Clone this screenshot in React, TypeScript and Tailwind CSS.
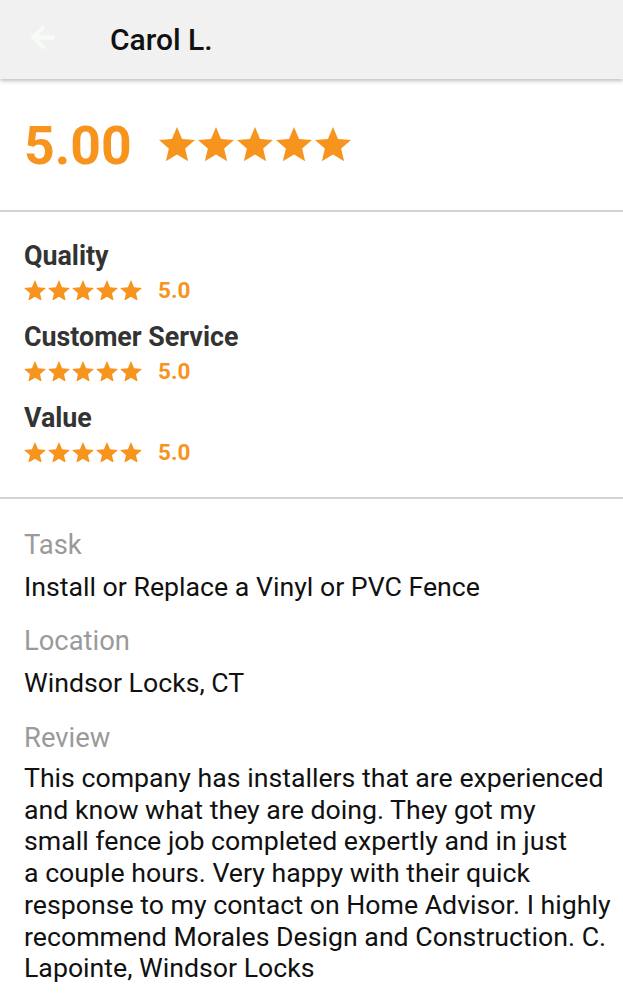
import React from "react";

const STAR = "M12 17.27L18.18 21l-1.64-7.03L22 9.24l-7.19-.61L12 2 9.19 8.63 2 9.24l5.46 4.73L5.82 21z";

function Stars({ size, gap }: { size: number; gap: string }) {
  return (
    <div className={`flex ${gap}`}>
      {[0, 1, 2, 3, 4].map((i) => (
        <svg key={i} width={size} height={size * 0.95} viewBox="2 2 20 19" fill="#f7941d">
          <path d={STAR} />
        </svg>
      ))}
    </div>
  );
}

function Rating({ label }: { label: string }) {
  return (
    <div className="flex flex-col">
      <div className="text-[26.8px] font-bold leading-[30px] text-[#333333]">{label}</div>
      <div className="mt-[5px] flex h-[28px] items-center">
        <Stars size={22} gap="gap-[2px]" />
        <span className="ml-[16px] text-[22.5px] font-bold leading-[28px] text-[#f7941d]">5.0</span>
      </div>
    </div>
  );
}

const lines = [
  "This company has installers that are experienced",
  "and know what they are doing. They got my",
  "small fence job completed expertly and in just",
  "a couple hours. Very happy with their quick",
  "response to my contact on Home Advisor. I highly",
  "recommend Morales Design and Construction. C.",
  "Lapointe, Windsor Locks",
];

export default function App() {
  return (
    <div className="min-h-[1000px] bg-white" style={{ fontFamily: "Roboto, 'Noto Sans', sans-serif" }}>
      <header className="relative z-10 flex h-[79px] items-center bg-[#f1f1f1] shadow-[0_2px_4px_rgba(0,0,0,0.25)]">
        <div className="ml-[29px] mb-[4px] flex w-[27px] items-center justify-center">
          <svg width="27" height="25" viewBox="3 3 18 18" fill="#f6fbf6">
            <path d="M20 11H7.83l5.59-5.59L12 4l-8 8 8 8 1.41-1.41L7.83 13H20v-2z" stroke="#f6fbf6" strokeWidth="1.2" />
          </svg>
        </div>
        <div className="ml-[54px] text-[30px] font-medium text-[#111111]">Carol L.</div>
      </header>

      <section className="flex h-[131px] items-center px-[24px] pt-[2px]">
        <span className="text-[53.5px] font-bold leading-none text-[#f7941d]">5.00</span>
        <div className="ml-[27px] mb-[2px]">
          <Stars size={36} gap="gap-[3px]" />
        </div>
      </section>

      <div className="h-[2px] bg-[#d4d4d4]" />

      <section className="flex flex-col gap-[18px] px-[24px] pt-[29px] pb-[31px]">
        <Rating label="Quality" />
        <Rating label="Customer Service" />
        <Rating label="Value" />
      </section>

      <div className="h-[2px] bg-[#d4d4d4]" />

      <section className="flex flex-col px-[24px] pt-[30px]">
        <div className="text-[27.4px] leading-[32px] text-[#9a9a9a]">Task</div>
        <div className="mt-[10px] text-[26.7px] leading-[32px] text-[#111111]">Install or Replace a Vinyl or PVC Fence</div>
        <div className="mt-[22px] text-[27.4px] leading-[32px] text-[#9a9a9a]">Location</div>
        <div className="mt-[10px] text-[26.7px] leading-[32px] text-[#111111]">Windsor Locks, CT</div>
        <div className="mt-[23px] text-[27.4px] leading-[32px] text-[#9a9a9a]">Review</div>
        <div className="mt-[9px] flex flex-col text-[26.7px] leading-[31.7px] text-[#111111]">
          {lines.map((l) => (
            <span key={l} className="whitespace-nowrap">{l}</span>
          ))}
        </div>
      </section>
    </div>
  );
}
